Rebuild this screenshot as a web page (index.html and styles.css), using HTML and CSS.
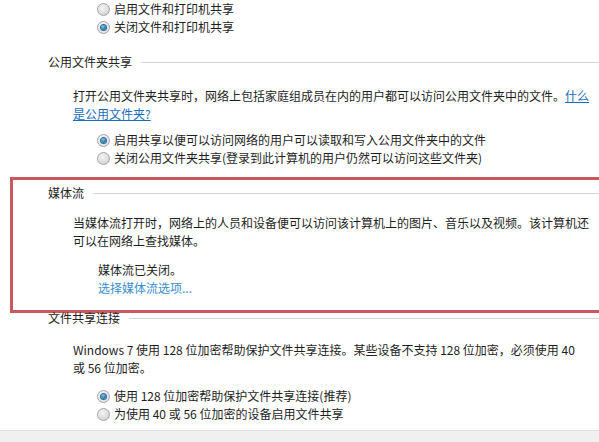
FILE: index.html
```html
<!DOCTYPE html>
<html>
	<head>
		<meta charset="UTF-8">
		<title>高级共享设置</title>
		<link rel="stylesheet" href="styles.css">
	</head>
	<body>
		<div id="page">
			<div class="opts first">
				<label class="opt"><span class="radio"></span>启用文件和打印机共享</label>
				<label class="opt"><span class="radio on"></span>关闭文件和打印机共享</label>
			</div>

			<div class="sec s1">
				<h3 class="head"><span>公用文件夹共享</span></h3>
				<p class="desc">打开公用文件夹共享时，网络上包括家庭组成员在内的用户都可以访问公用文件夹中的文件。<a href="#" class="link">什么</a><br><a href="#" class="link">是公用文件夹?</a></p>
				<div class="opts">
					<label class="opt"><span class="radio on"></span>启用共享以便可以访问网络的用户可以读取和写入公用文件夹中的文件</label>
					<label class="opt"><span class="radio"></span>关闭公用文件夹共享(登录到此计算机的用户仍然可以访问这些文件夹)</label>
				</div>
			</div>

			<div class="sec s2 mark">
				<h3 class="head"><span>媒体流</span></h3>
				<p class="desc">当媒体流打开时，网络上的人员和设备便可以访问该计算机上的图片、音乐以及视频。该计算机还可以在网络上查找媒体。</p>
				<div class="state">
					<p>媒体流已关闭。</p>
					<a href="#" class="more">选择媒体流选项...</a>
				</div>
			</div>

			<div class="sec s3">
				<h3 class="head"><span>文件共享连接</span></h3>
				<p class="desc">Windows 7 使用 128 位加密帮助保护文件共享连接。某些设备不支持 128 位加密，必须使用 40<br>或 56 位加密。</p>
				<div class="opts">
					<label class="opt"><span class="radio on"></span>使用 128 位加密帮助保护文件共享连接(推荐)</label>
					<label class="opt"><span class="radio"></span>为使用 40 或 56 位加密的设备启用文件共享</label>
				</div>
			</div>

			<div class="bar"></div>
		</div>
	</body>
</html>
```

FILE: styles.css
```css
*{margin: 0;padding: 0;}
body{
	font-size: 12px;
	font-family: "Noto Sans CJK SC", "Microsoft YaHei", sans-serif;
	color: #1e1e1e;
	background: #fff;
	overflow: hidden;
}
#page{
	width: 640px;
}
.sec{
	padding-left: 48px;
}
.head{
	display: flex;
	align-items: center;
	gap: 9px;
	height: 18px;
	line-height: 18px;
	font-size: 12px;
	font-weight: normal;
	color: #222;
}
.head::after{
	content: "";
	flex: 1;
	height: 1px;
	background: #d4d4d4;
}
.desc{
	width: 520px;
	margin-left: 25px;
	line-height: 18px;
}
.link{
	color: #1a6dba;
	text-decoration: underline;
}
.opts{
	display: flex;
	flex-direction: column;
	padding-left: 49px;
}
.first{
	padding-left: 97px;
}
.opt{
	display: flex;
	align-items: center;
	gap: 4px;
	height: 18px;
	line-height: 18px;
}
.radio{
	width: 11px;
	height: 11px;
	border: 1px solid #a3a6aa;
	border-radius: 50%;
	background: radial-gradient(circle at 40% 35%, #f4f4f4 0, #dedede 55%, #c4c4c4 100%);
	display: flex;
	align-items: center;
	justify-content: center;
	flex: none;
}
.radio.on{
	background: radial-gradient(circle at 40% 35%, #fafafa 0, #e6e6e6 60%, #cdcdcd 100%);
}
.radio.on::after{
	content: "";
	width: 5px;
	height: 5px;
	border-radius: 50%;
	background: radial-gradient(circle at 40% 35%, #7cc8f2 0, #2d7cbc 55%, #1a5387 100%);
	box-shadow: 0 0 0 1px #3a6a94;
}

/* sections */
.s1{
	margin-top: 17px;
}
.s1 .desc{
	margin-top: 16px;
}
.s1 .opts{
	margin-top: 8px;
}
.mark{
	margin: 10px 0 0 10px;
	padding: 4px 0 13px 35px;
	border: 3px solid #c8585b;
	border-right: 0;
}
.s2 .desc{
	margin-top: 12px;
}
.state{
	margin: 11px 0 0 50px;
	line-height: 18px;
}
.more{
	display: block;
	color: #3a8dcc;
	text-decoration: none;
}
.s3{
	margin-top: -4px;
}
.s3 .desc{
	margin-top: 14px;
}
.s3 .opts{
	margin-top: 10px;
}
.bar{
	margin-top: 7px;
	height: 20px;
	background: #f0f0f0;
	border-top: 1px solid #e0e0e0;
}
```
